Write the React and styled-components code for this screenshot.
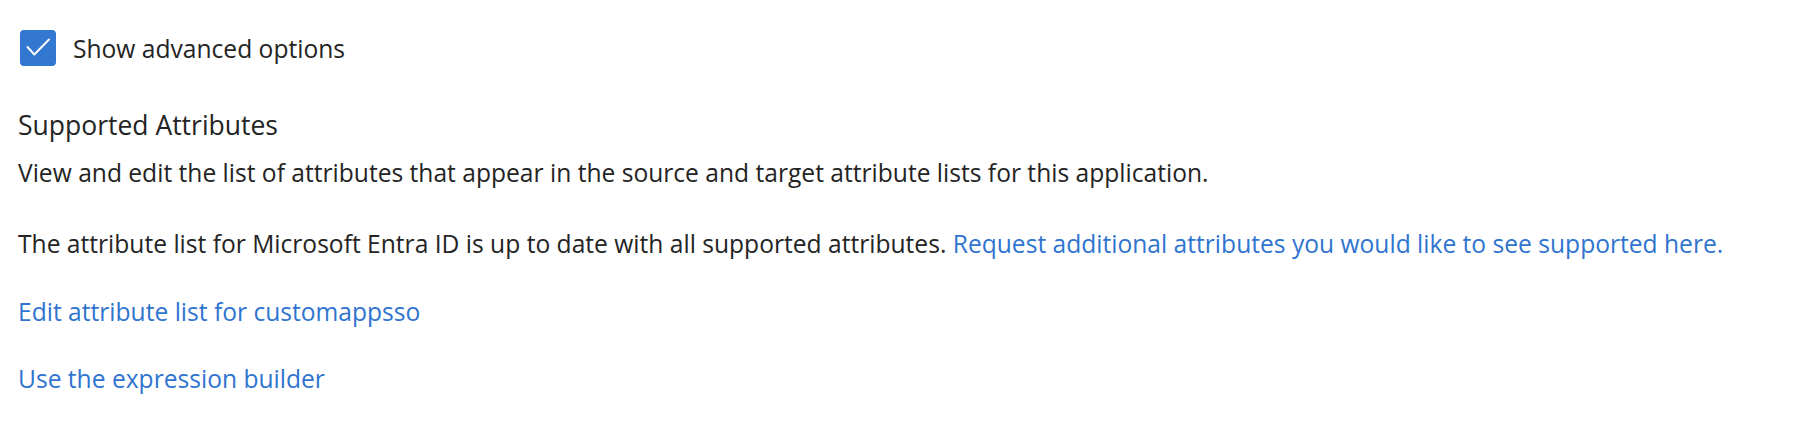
import styled, { createGlobalStyle } from "styled-components";

const GlobalStyle = createGlobalStyle`
  body {
    margin: 0;
    background: #ffffff;
    font-family: "Open Sans", "Noto Sans", sans-serif;
    color: #242424;
  }
`;

const Page = styled.div`
  display: flex;
  flex-direction: column;
  align-items: flex-start;
  padding: 30px 0 0 18px;
`;

const CheckRow = styled.label`
  display: flex;
  align-items: center;
  gap: 17px;
  height: 36px;
  margin-left: 2px;
  font-size: 24.6px;
  cursor: pointer;
`;

const Box = styled.span`
  width: 36px;
  height: 36px;
  border-radius: 4px;
  background: #3277d0;
  display: flex;
`;

const Heading = styled.h2`
  margin: 39px 0 0;
  font-size: 26.5px;
  font-weight: 400;
  line-height: 40px;
`;

const Text = styled.p`
  margin: ${(p) => p.$top}px 0 0;
  font-size: 24.6px;
  line-height: 36px;
`;

const Link = styled.a`
  color: #2f74cf;
  text-decoration: none;
  cursor: pointer;
`;

const BlockLink = styled(Link)`
  display: block;
  margin-top: ${(p) => p.$top}px;
  font-size: 24.6px;
  line-height: 36px;
`;

export default function App() {
  return (
    <>
      <GlobalStyle />
      <Page>
        <CheckRow>
          <Box>
            <svg width="36" height="36" viewBox="0 0 36 36" fill="none">
              <path d="M7.5 17 L14.3 24.5 L29 9.5" stroke="#fff" strokeWidth="1.9" strokeLinecap="round" strokeLinejoin="round" />
            </svg>
          </Box>
          Show advanced options
        </CheckRow>
        <Heading>Supported Attributes</Heading>
        <Text $top={10}>
          View and edit the list of attributes that appear in the source and target attribute lists for this application.
        </Text>
        <Text $top={35}>
          The attribute list for Microsoft Entra ID is up to date with all supported attributes.{" "}
          <Link>Request additional attributes you would like to see supported here.</Link>
        </Text>
        <BlockLink $top={32}>Edit attribute list for customappsso</BlockLink>
        <BlockLink $top={31}>Use the expression builder</BlockLink>
      </Page>
    </>
  );
}
